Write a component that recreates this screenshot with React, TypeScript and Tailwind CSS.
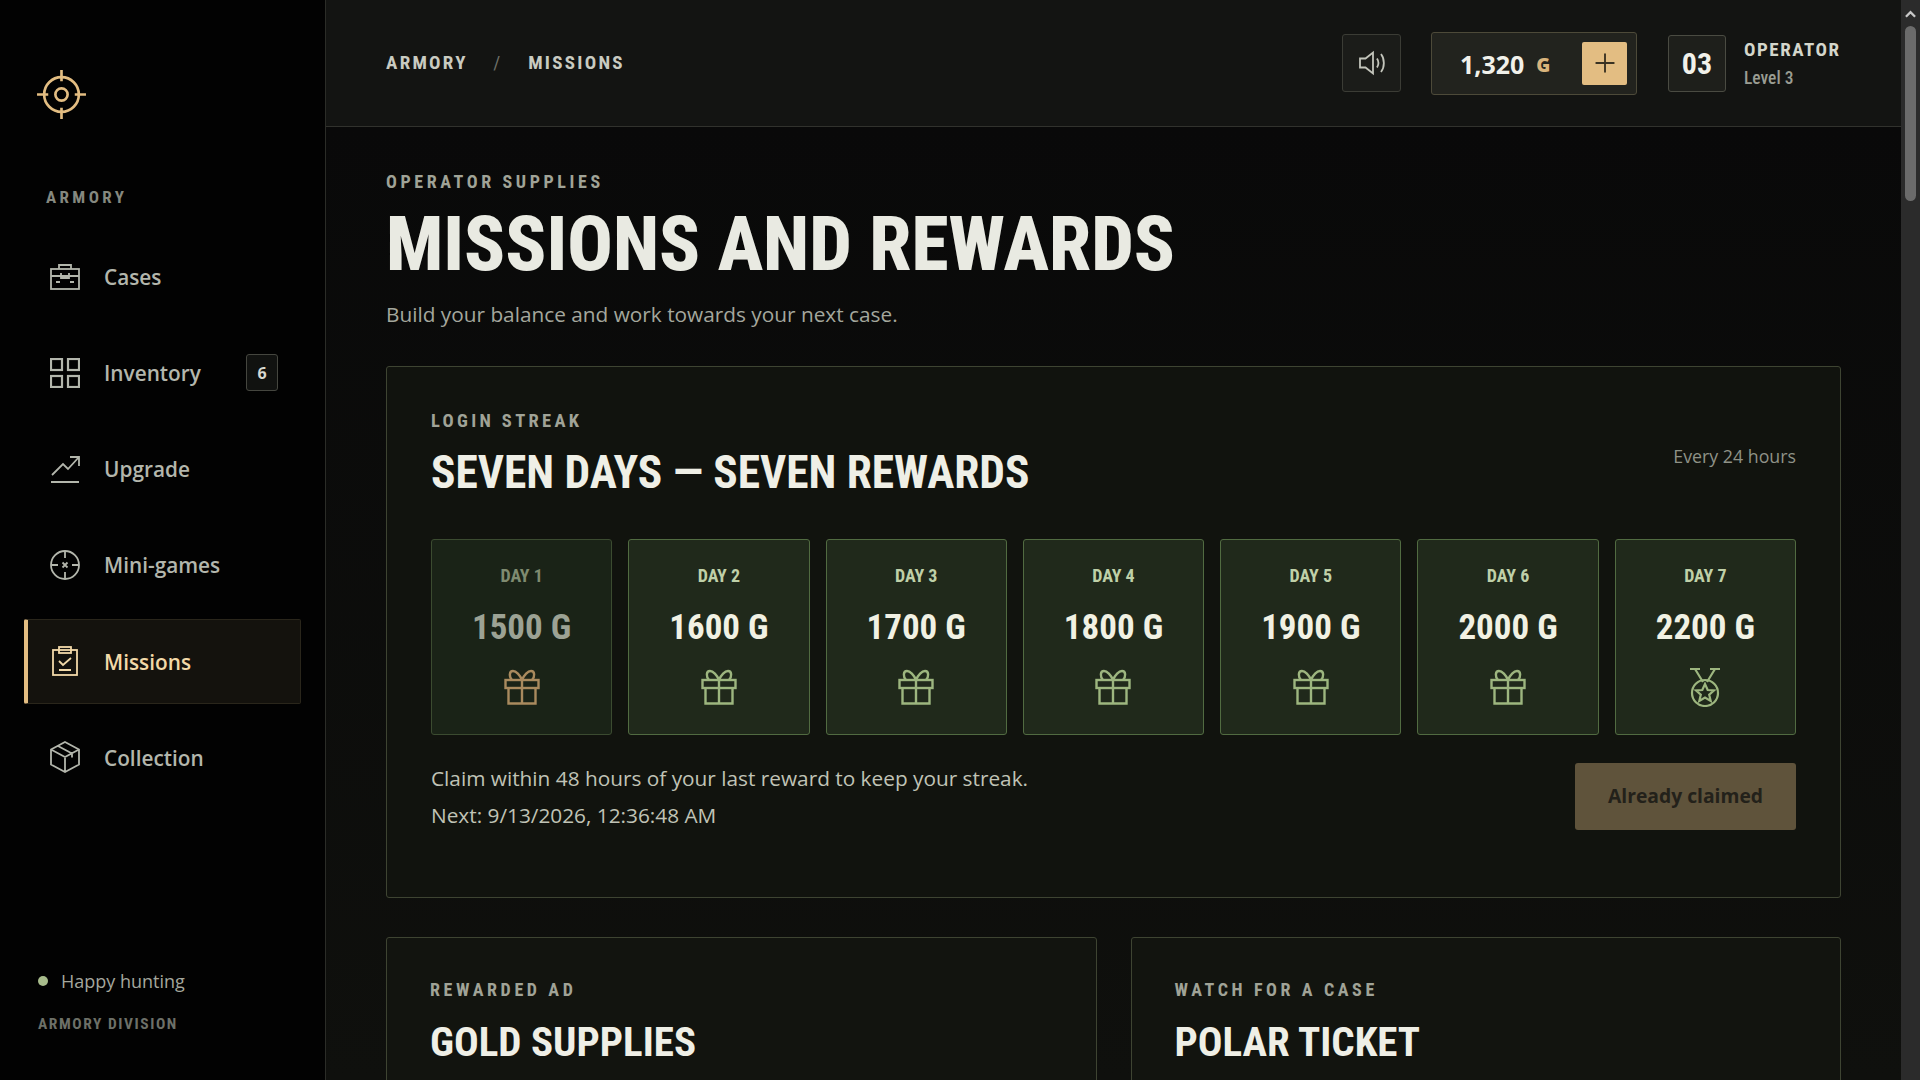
import { Plus } from 'lucide-react';
import type { ReactNode } from 'react';

const stroke = {
    fill: 'none',
    stroke: 'currentColor',
    strokeWidth: 1.8,
};

function Crosshair() {
    return (
        <svg viewBox="0 0 50 50" className="w-[51px] h-[51px] text-[#e3bd82]" {...stroke} strokeWidth={2.6}>
            <circle cx="25" cy="25" r="17" />
            <circle cx="25" cy="25" r="6" />
            <path d="M25 1v11M25 38v11M1 25h11M38 25h11" />
        </svg>
    );
}

function SoundIcon() {
    return (
        <svg viewBox="0 0 28 28" className="w-[28px] h-[28px]" {...stroke}>
            <path d="M2 9.500h5.500L15 3.500v21l-7.500-6H2Z" />
            <path d="M19 9.500c1.800 2.800 1.800 6.200 0 9M23 5c3.800 5 3.800 13 0 18" />
        </svg>
    );
}

function CasesIcon() {
    return (
        <svg viewBox="0 0 30 26" className="w-[30px] h-[26px]" {...stroke}>
            <rect x="1" y="5" width="28" height="20" />
            <path d="M9 5V1h12v4M1 12h28M11 9v5h8V9M6 18h4M20 18h4" />
        </svg>
    );
}

function InventoryIcon() {
    return (
        <svg viewBox="0 0 30 30" className="w-[30px] h-[30px]" {...stroke} strokeWidth={2.2}>
            <rect x="1" y="1" width="11" height="11" />
            <rect x="18" y="1" width="11" height="11" />
            <rect x="1" y="18" width="11" height="11" />
            <rect x="18" y="18" width="11" height="11" />
        </svg>
    );
}

function UpgradeIcon() {
    return (
        <svg viewBox="0 0 30 28" className="w-[30px] h-[28px]" {...stroke}>
            <path d="M1 27h28M2 20 13 9l5 5L29 2M20 2h9v9" />
        </svg>
    );
}

function MiniGamesIcon() {
    return (
        <svg viewBox="0 0 30 30" className="w-[30px] h-[30px]" {...stroke}>
            <circle cx="15" cy="15" r="14" />
            <path d="M15 1v7M15 22v7M1 15h7M22 15h7M12.500 12.500l5 5M17.500 12.500l-5 5" />
        </svg>
    );
}

function MissionsIcon() {
    return (
        <svg viewBox="0 0 28 30" className="w-[28px] h-[30px]" {...stroke}>
            <rect x="2" y="4" width="24" height="25" />
            <rect x="8" y="1" width="12" height="6" />
            <path d="m8 15 4 4 8-7M8 24h12" />
        </svg>
    );
}

function CollectionIcon() {
    return (
        <svg viewBox="0 0 30 32" className="w-[30px] h-[32px]" {...stroke}>
            <path d="M15 1 29 8.500v15L15 31 1 23.500v-15ZM1 8.500 15 16l14-7.500M15 16v15M8 5l14 7.500v4" />
        </svg>
    );
}

function GiftIcon({ className }: { className: string }) {
    return (
        <svg viewBox="0 0 36 36" className={`w-[36px] h-[36px] ${className}`} {...stroke} strokeWidth={2.4}>
            <rect x="1.500" y="11" width="33" height="8" />
            <path d="M4.500 19v15.500h27V19M18 11v23.500" />
            <path d="M18 11c-2-5-6-9-9-9-4 0-4 6-1 9M18 11c2-5 6-9 9-9 4 0 4 6 1 9" />
        </svg>
    );
}

function MedalIcon({ className }: { className: string }) {
    return (
        <svg viewBox="0 0 36 40" className={`w-[36px] h-[40px] ${className}`} {...stroke} strokeWidth={2.2}>
            <path d="M3 2h10M23 2h10M8 2l8 13M28 2l-8 13" />
            <circle cx="18" cy="26" r="13" />
            <path d="m18 17 2.700 6 6.300.500-4.800 4.200 1.500 6.300-5.700-3.400-5.700 3.400 1.500-6.300L9 23.500l6.300-.5Z" />
        </svg>
    );
}

type NavItem = { label: string; icon: ReactNode; badge?: string; active?: boolean };

const navItems: NavItem[] = [
    { label: 'Cases', icon: <CasesIcon /> },
    { label: 'Inventory', icon: <InventoryIcon />, badge: '6' },
    { label: 'Upgrade', icon: <UpgradeIcon /> },
    { label: 'Mini-games', icon: <MiniGamesIcon /> },
    { label: 'Missions', icon: <MissionsIcon />, active: true },
    { label: 'Collection', icon: <CollectionIcon /> },
];

const days = [
    { day: 'DAY 1', gold: '1500 G', claimed: true },
    { day: 'DAY 2', gold: '1600 G' },
    { day: 'DAY 3', gold: '1700 G' },
    { day: 'DAY 4', gold: '1800 G' },
    { day: 'DAY 5', gold: '1900 G' },
    { day: 'DAY 6', gold: '2000 G' },
    { day: 'DAY 7', gold: '2200 G', medal: true },
];

const condensed = "font-['Roboto',sans-serif] [font-stretch:75%]";

function Sidebar() {
    return (
        <aside className="w-[326px] h-full shrink-0 bg-[#020202] border-r border-[#2b2c27] flex flex-col">
            <div className="pl-[36px] pt-[69px] h-[180px]">
                <Crosshair />
            </div>
            <p className={`pl-[46px] text-[17px] leading-[34px] font-bold tracking-[0.2em] text-[#85887f] ${condensed}`}>ARMORY</p>
            <nav className="flex flex-col gap-[11.200px] px-[24px] mt-[20px]">
                {navItems.map((item) => (
                    <div
                        key={item.label}
                        className={`h-[85px] flex items-center rounded-[2px] ${
                            item.active
                                ? 'bg-[#14120d] border border-[#2a261b] border-l-[4px] border-l-[#e3bd82] text-[#f2d9a8] pl-[22px] pr-[24px]'
                                : 'text-[#b3b6ac] pl-[26px] pr-[23px]'
                        }`}
                    >
                        <span className="w-[30px] flex justify-center shrink-0">{item.icon}</span>
                        <span className="ml-[24px] flex-1 pt-[2px] text-[20.800px] font-semibold">{item.label}</span>
                        {item.badge && (
                            <span className="w-[32px] h-[37px] flex items-center justify-center rounded-[3px] border border-[#45463f] bg-[#111210] text-[#d8d9d0] text-[16px] font-bold">
                                {item.badge}
                            </span>
                        )}
                    </div>
                ))}
            </nav>
            <div className="mt-auto pl-[38px] pb-[44px]">
                <div className="flex items-center gap-[13px] text-[#a4a79d] text-[18px]">
                    <span className="w-[10px] h-[10px] rounded-full bg-[#a8bc8c]" />
                    <span>Happy hunting</span>
                </div>
                <p className={`mt-[18px] text-[15.500px] font-bold tracking-[0.1em] text-[#6d7068] ${condensed}`}>ARMORY DIVISION</p>
            </div>
        </aside>
    );
}

function Header() {
    return (
        <header className="h-[127px] shrink-0 bg-[#131412] border-b border-[#31322d] flex items-center pl-[60px] pr-[59px]">
            <div className={`flex items-center text-[#c9cbc1] text-[19px] font-bold tracking-[0.12em] ${condensed}`}>
                <span>ARMORY</span>
                <span className="mx-[25.500px] font-normal text-[#6d7068]">/</span>
                <span>MISSIONS</span>
            </div>
            <div className="ml-auto flex items-center">
                <button className="w-[59px] h-[58px] rounded-[3px] border border-[#3b3c35] bg-[#1b1c19] flex items-center justify-center text-[#c3c5bb]">
                    <SoundIcon />
                </button>
                <div className="ml-[30px] w-[206px] h-[63px] rounded-[3px] border border-[#4d4a39] bg-[#22231e] flex items-center pl-[28px] pr-[9px]">
                    <span className="pt-[3px] text-[25px] font-bold text-[#f1f1ea] font-['Noto_Sans',sans-serif]">1,320</span>
                    <span className="ml-[12px] pt-[4px] text-[19px] font-extrabold text-[#d9b47c]">G</span>
                    <span className="ml-auto w-[45px] h-[43px] rounded-[2px] bg-[#e3bd82] flex items-center justify-center text-[#3a3222]">
                        <Plus size={30} strokeWidth={1.5} />
                    </span>
                </div>
                <div className={`ml-[31px] w-[58px] h-[57px] rounded-[3px] border border-[#4a4b42] bg-[#1e1f1b] flex items-center justify-center text-[#f1f1ea] text-[30px] font-bold ${condensed}`}>
                    03
                </div>
                <div className={`ml-[18px] w-[98px] pt-[2px] ${condensed}`}>
                    <p className="text-[19px] leading-[28px] font-bold tracking-[0.08em] text-[#d4d6cb]">OPERATOR</p>
                    <p className="text-[17.500px] leading-[28px] font-medium text-[#9a9d92]">Level 3</p>
                </div>
            </div>
        </header>
    );
}

function DayCard({ day, gold, claimed, medal }: { day: string; gold: string; claimed?: boolean; medal?: boolean }) {
    return (
        <div
            className={`h-[196px] rounded-[3px] border flex flex-col items-center pt-[22px] ${condensed} ${
                claimed ? 'bg-[#1a2317] border-[#3b4b30]' : 'bg-[#20291b] border-[#516b41]'
            }`}
        >
            <p className={`text-[18px] leading-[28px] font-bold ${claimed ? 'text-[#7f8b70]' : 'text-[#bfd0a8]'}`}>{day}</p>
            <p className={`mt-[16px] text-[35px] leading-[44px] font-bold ${claimed ? 'text-[#9ca294]' : 'text-[#f1f1e3]'}`}>{gold}</p>
            <div className="mt-[17px] h-[40px] flex items-center">
                {medal ? (
                    <MedalIcon className="text-[#9db67f]" />
                ) : (
                    <GiftIcon className={claimed ? 'text-[#a98a5e]' : 'text-[#9db67f]'} />
                )}
            </div>
        </div>
    );
}

function BottomCard({ eyebrow, title }: { eyebrow: string; title: string }) {
    return (
        <div className={`h-[200px] rounded-[3px] border border-[#3e4432] bg-[#12140f] px-[43px] pt-[38px] ${condensed}`}>
            <p className="text-[18px] leading-[28px] font-bold tracking-[0.2em] text-[#a0a397]">{eyebrow}</p>
            <p className="mt-[12px] text-[41px] leading-[52px] font-bold text-[#efefe6]">{title}</p>
        </div>
    );
}

function Scrollbar() {
    return (
        <div className="w-[19px] h-full shrink-0 bg-[#2b2b2b] flex flex-col items-center">
            <svg viewBox="0 0 12 8" className="w-[11px] h-[8px] mt-[10px] text-[#c8c8c8]" fill="none" stroke="currentColor" strokeWidth={2.5}>
                <path d="M1 7 6 2l5 5" />
            </svg>
            <div className="mt-[8px] w-[11px] h-[175px] rounded-full bg-[#6b6b6b]" />
        </div>
    );
}

export default function App() {
    return (
        <div className="w-[1920px] h-[1080px] flex overflow-hidden bg-[#090909] font-['Open_Sans',sans-serif]">
            <Sidebar />
            <div className="flex-1 min-w-0 h-full flex flex-col">
                <Header />
                <main className="flex-1 min-h-0 overflow-hidden bg-gradient-to-b from-[#090909] to-[#0f100d] pl-[60px] pr-[60px] pt-[40px]">
                    <p className={`text-[18px] leading-[30px] font-bold tracking-[0.2em] text-[#a0a397] ${condensed}`}>OPERATOR SUPPLIES</p>
                    <h1 className={`mt-[3px] text-[75.600px] leading-[88px] font-extrabold text-[#e9eae2] ${condensed}`}>MISSIONS AND REWARDS</h1>
                    <p className="mt-[10px] text-[20.800px] leading-[32px] text-[#a4a79d]">Build your balance and work towards your next case.</p>

                    <section className="mt-[36px] h-[532px] rounded-[3px] border border-[#3e4432] bg-[#11130e] px-[44px] pt-[40px]">
                        <p className={`text-[18.500px] leading-[28px] font-bold tracking-[0.18em] text-[#a0a397] ${condensed}`}>LOGIN STREAK</p>
                        <div className="flex items-start justify-between">
                            <h2 className={`mt-[12px] text-[45.400px] leading-[52px] font-bold text-[#efefe6] ${condensed}`}>SEVEN DAYS — SEVEN REWARDS</h2>
                            <span className="text-[17.800px] leading-[28px] text-[#8f9287] mt-[7px]">Every 24 hours</span>
                        </div>
                        <div className="mt-[40px] grid grid-cols-7 gap-[16px]">
                            {days.map((d) => (
                                <DayCard key={d.day} {...d} />
                            ))}
                        </div>
                        <div className="mt-[24px] flex items-center justify-between">
                            <div className="pt-[1px] text-[20.800px] leading-[37px] text-[#c0c3b6]">
                                <p>Claim within 48 hours of your last reward to keep your streak.</p>
                                <p>Next: 9/13/2026, 12:36:48 AM</p>
                            </div>
                            <button className="w-[221px] h-[67px] rounded-[3px] bg-[#5f533b] text-[#23211a] text-[19.300px] font-bold">
                                Already claimed
                            </button>
                        </div>
                    </section>

                    <div className="mt-[39px] grid grid-cols-2 gap-[34px]">
                        <BottomCard eyebrow="REWARDED AD" title="GOLD SUPPLIES" />
                        <BottomCard eyebrow="WATCH FOR A CASE" title="POLAR TICKET" />
                    </div>
                </main>
            </div>
            <Scrollbar />
        </div>
    );
}
